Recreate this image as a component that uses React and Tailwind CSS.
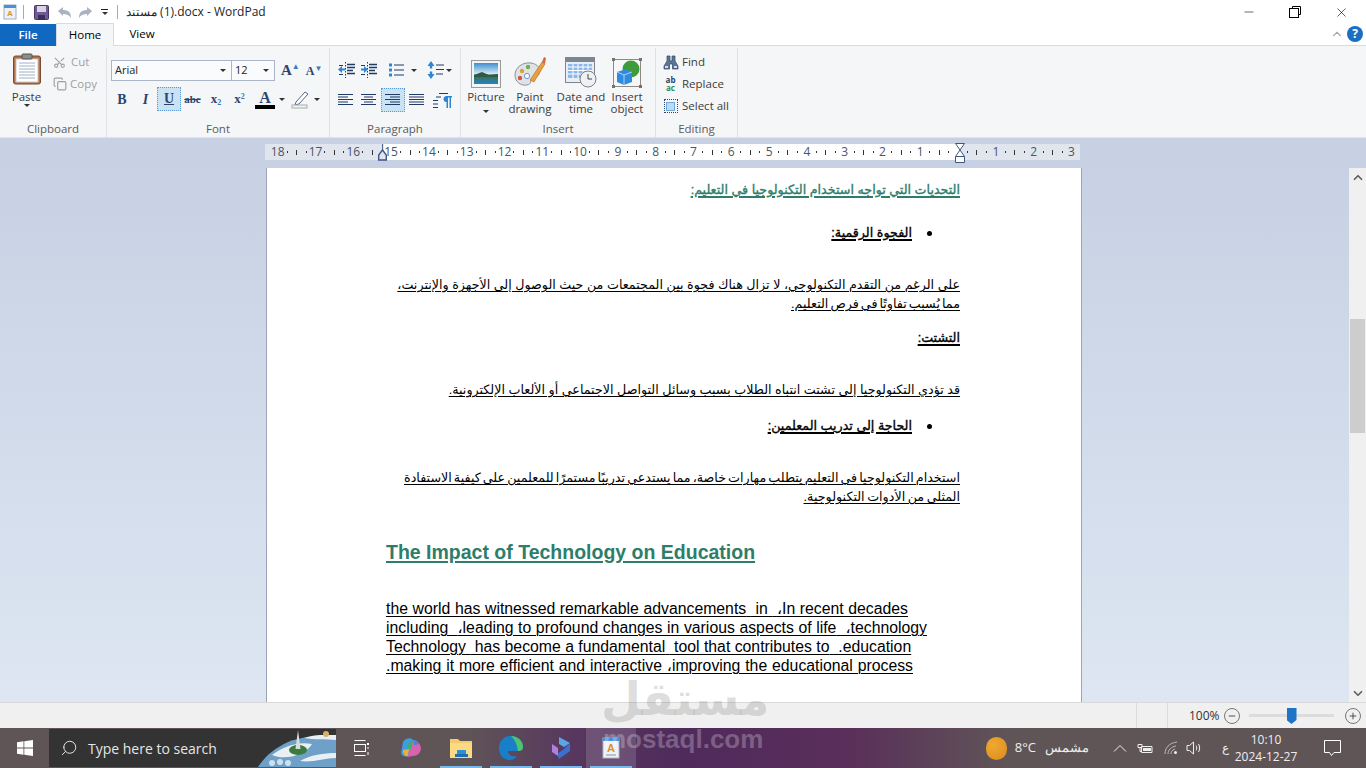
import React from 'react';
import { Minus, X, ChevronUp, ChevronDown, Search, Scissors, Copy, Plus } from 'lucide-react';

const Caret = ({ className = '' }) => <span className={`inline-block w-0 h-0 border-x-[3px] border-x-transparent border-t-[3px] border-t-[#333] ${className}`} />;

const navy = '#1f3b66';

const Lines = ({ rows }) => (
  <svg width="18" height="16" viewBox="0 0 18 16" stroke={navy} strokeWidth="1">
    {rows.map((r, i) => <line key={i} x1={r[0]} x2={r[1]} y1={i * 2.5 + 2.5} y2={i * 2.5 + 2.5} />)}
  </svg>
);

const IndentIcon = ({ flip }) => (
  <svg width="18" height="16" viewBox="0 0 18 16">
    <path d="M7.500 0v16" stroke={navy} strokeDasharray="1.500 1.500" />
    <path d="M9 2.500h8M9 5.500h8M9 8.500h6M9 11.500h8" stroke={navy} strokeWidth="1.300" fill="none" />
    <path d="M1 3.500h4M1 12.500h4" stroke={navy} />
    {flip
      ? <path d="M1 6.500h3V4l4 3.500L4 11V8.500H1z" fill="#2a86d6" />
      : <path d="M7 6.500H4V4L0 7.500 4 11V8.500h3z" fill="#2a86d6" />}
  </svg>
);

const ListIcon = () => (
  <svg width="18" height="16" viewBox="0 0 18 16">
    <path d="M1 1.500h3v3H1zM1 6.500h3v3H1zM1 11.500h3v3H1z" fill="#2a86d6" />
    <path d="M6 3h10M6 8h10M6 13h10" stroke={navy} />
  </svg>
);

const SpacingIcon = () => (
  <svg width="18" height="18" viewBox="0 0 18 18">
    <path d="M4 0l3.500 5H5.200v2.500H2.800V5H.5zM4 18L.5 13h2.300v-2.500h2.400V13h2.300z" fill="#2a86d6" />
    <path d="M9 4h8M9 8.500h8M9 13h7" stroke={navy} />
  </svg>
);

const RtlIcon = () => (
  <svg width="20" height="17" viewBox="0 0 20 17">
    <path d="M7 1.500h9M4 5h5M1 8.500h5M1 12h5M1 15.500h5" stroke={navy} />
    <path d="M14 4h6v1.500h-1V16h-1.500V5.500H16V16h-1.500V10a3 3 0 0 1-3-3 3 3 0 0 1 2.500-3z" fill="#2a86d6" />
  </svg>
);

const Clipboard = () => (
  <svg width="30" height="32" viewBox="0 0 30 32">
    <rect x="1.500" y="3" width="27" height="28" rx="2" fill="#b0714a" stroke="#7c4a2d" />
    <rect x="4" y="6" width="22" height="23" fill="#fff" stroke="#c9c9c9" />
    <path d="M7 10h16M7 13h16M7 16h16M7 19h16M7 22h16M7 25h16" stroke="#9fb0c8" />
    <rect x="10" y="1" width="10" height="5" rx="1" fill="#8d8d8d" stroke="#555" />
  </svg>
);

const PictureIcon = () => (
  <svg width="30" height="28" viewBox="0 0 30 28">
    <rect x="0.500" y="0.500" width="29" height="27" fill="#f4f4f4" stroke="#9a9a9a" />
    <defs><linearGradient id="sky" x1="0" y1="0" x2="0" y2="1"><stop offset="0" stopColor="#3d8fd0" /><stop offset=".5" stopColor="#cfe6f2" /><stop offset=".6" stopColor="#3f6a4e" /><stop offset="1" stopColor="#1f86c8" /></linearGradient></defs>
    <rect x="3" y="3" width="24" height="21" fill="url(#sky)" />
    <path d="M3 15l8-3 7 3 9-1v3H3z" fill="#2f5a40" />
  </svg>
);

const PaletteIcon = () => (
  <svg width="34" height="32" viewBox="0 0 34 32">
    <path d="M2 19C2 11 10 6 18 7c7 1 10 6 8 11-1 3-5 2-7 4-2 3 0 6-5 7C8 30 2 26 2 19z" fill="#dfe3e8" stroke="#8b9099" />
    <circle cx="9" cy="15" r="2.200" fill="#d9a23b" />
    <circle cx="15" cy="11" r="2.200" fill="#6fae4f" />
    <circle cx="7" cy="22" r="2.200" fill="#d2553d" />
    <circle cx="14" cy="20" r="2.600" fill="#fff" stroke="#6c95c9" />
    <path d="M17 24L29 6l3 2-11 18z" fill="#e8a03c" stroke="#b06f22" strokeWidth=".6" />
    <path d="M29 6l2-5 2 1-1 6z" fill="#d8673a" />
  </svg>
);

const CalendarIcon = () => (
  <svg width="32" height="32" viewBox="0 0 32 32">
    <rect x="0.500" y="1.500" width="29" height="25" fill="#e9eef5" stroke="#80858d" />
    <rect x="1" y="2" width="28" height="4" fill="#7d8794" />
    <path d="M3 8h24v14H3z" fill="#8cb7ea" />
    <path d="M3 11h24M3 14.500h24M3 18h24M8 8v14M13 8v14M18 8v14M23 8v14" stroke="#fff" />
    <circle cx="23" cy="23" r="8" fill="#eef0f2" stroke="#7c8087" />
    <path d="M23 18v5h4" stroke="#444" fill="none" />
  </svg>
);

const ObjectIcon = () => (
  <svg width="30" height="30" viewBox="0 0 30 30">
    <rect x="1.500" y="1.500" width="27" height="27" fill="#f7f7f7" stroke="#8f8a80" />
    <circle cx="19" cy="11" r="8.500" fill="#3f9b3a" />
    <path d="M5 14l9-3 6 3v10l-8 3-7-3z" fill="#2f8be0" />
    <path d="M5 14l7 3 8-3M12 17v10" stroke="#a9d3f7" fill="none" />
    <path d="M0 0h3v3H0zM27 0h3v3h-3zM0 27h3v3H0zM27 27h3v3h-3z" fill="#77736b" />
  </svg>
);

const Binoculars = () => (
  <svg width="16" height="15" viewBox="0 0 16 15">
    <path d="M4 1h3v5h2V1h3v5l3 5v3H9.500V9h-3v5H1v-3l3-5z" fill="#5d7694" stroke="#2f4868" strokeWidth=".7" />
    <path d="M2 11h3v2H2zM11 11h3v2h-3z" fill="#cfdbea" />
  </svg>
);

const SmallAction = ({ icon, label }) => (
  <div className="h-[22px] flex items-center gap-[3px] pl-[6px]">
    <span className="w-[17px] flex justify-center">{icon}</span>
    <span>{label}</span>
  </div>
);

const BigButton = ({ icon, lines, caret, width }) => (
  <div className={`${width} flex flex-col items-center`}>
    <div className="h-[34px] flex items-end justify-center">{icon}</div>
    <div className="mt-[3px] leading-[12px] text-center whitespace-nowrap">
      {lines.map((l) => <div key={l}>{l}</div>)}
      {caret && <Caret />}
    </div>
  </div>
);

const Group = ({ label, width, children }) => (
  <div className={`${width} h-[89px] mt-[2px] border-r border-[#dfe1e5] flex flex-col shrink-0`}>
    <div className="flex-1 min-h-0">{children}</div>
    <div className="h-[16px] text-center text-[#5b5b5b] leading-[16px]">{label}</div>
  </div>
);

const Ribbon = () => (
  <div className="h-[92px] shrink-0 bg-[#f5f6f7] flex text-[11.5px] text-[#3c3c3c] border-b border-[#e1e3e6]">
    <Group label="Clipboard" width="w-[107px]">
      <div className="flex pt-[5px]">
        <div className="w-[53px] flex flex-col items-center">
          <Clipboard />
          <div className="mt-[5px] leading-[14px]">Paste</div>
          <Caret />
        </div>
        <div className="text-[#a0a0a0] -mt-[2px]">
          <div className="h-[22px] flex items-center gap-[5px]"><Scissors size={13} className="-rotate-90" />Cut</div>
          <div className="h-[22px] flex items-center gap-[3px]"><Copy size={14} />Copy</div>
        </div>
      </div>
    </Group>

    <Group label="Font" width="w-[223px]">
      <div className="pl-[4px] pt-[12px]">
        <div className="flex items-center h-[21px]">
          <div className="w-[121px] h-[21px] border border-[#abb5c9] bg-[#fafbfd] flex items-center justify-between px-[3px] text-[#222] text-[11px]">Arial<Caret className="mr-[2px]" /></div>
          <div className="w-[43px] h-[21px] border border-l-0 border-[#abb5c9] bg-[#fafbfd] flex items-center justify-between px-[3px] text-[#222] text-[11px]">12<Caret className="mr-[2px]" /></div>
          <div className="ml-[6px] text-[15px] font-bold font-['Liberation_Serif',serif] text-[#2b4470] leading-none">A<span className="text-[8px] align-top text-[#3a7bc0]">▲</span></div>
          <div className="ml-[6px] text-[12px] font-bold font-['Liberation_Serif',serif] text-[#2b4470] leading-none">A<span className="text-[8px] align-top text-[#3a7bc0]">▼</span></div>
        </div>
        <div className="flex items-center h-[24px] mt-[6px] -ml-px text-[#2b4470] font-['Liberation_Serif',serif]">
          <div className="w-[24px] text-center font-bold text-[14px]">B</div>
          <div className="w-[23px] text-center italic font-bold text-[14px]">I</div>
          <div className="w-[24px] h-[24px] bg-[#c9e2f4] border border-dotted border-[#5a9bd4] text-center font-bold text-[14px] underline leading-[22px]">U</div>
          <div className="w-[23px] text-center text-[11px] line-through font-bold">abc</div>
          <div className="w-[24px] text-center font-bold text-[13px]">x<sub className="text-[8px] text-[#3a7bc0]">2</sub></div>
          <div className="w-[23px] text-center font-bold text-[13px]">x<sup className="text-[8px] text-[#3a7bc0]">2</sup></div>
          <div className="w-[20px] ml-[4px] text-center font-bold text-[16px] leading-[15px] border-b-[4px] border-black">A</div>
          <Caret className="ml-[4px]" />
          <svg className="ml-[6px]" width="20" height="20" viewBox="0 0 20 20"><path d="M5 13l9-10 3 2-9 10-4 1z" fill="#fff" stroke="#4d6a90" /><rect x="1" y="16" width="15" height="3" fill="#f3f3f3" stroke="#aaa" /></svg>
          <Caret className="ml-[3px]" />
        </div>
      </div>
    </Group>

    <Group label="Paragraph" width="w-[131px]">
      <div className="pl-[4px] pt-[13px]">
        <div className="flex items-center h-[18px] pl-[4px]">
          <IndentIcon />
          <span className="ml-[4px]"><IndentIcon flip /></span>
          <span className="ml-[10px]"><ListIcon /></span>
          <Caret className="ml-[5px]" />
          <span className="ml-[10px]"><SpacingIcon /></span>
          <Caret className="ml-[1px]" />
        </div>
        <div className="flex items-center h-[24px] mt-[9px]">
          <div className="w-[23px] flex justify-center"><Lines rows={[[1, 16], [1, 11], [1, 16], [1, 11], [1, 16]]} /></div>
          <div className="w-[24px] flex justify-center"><Lines rows={[[1, 16], [4, 13], [1, 16], [4, 13], [1, 16]]} /></div>
          <div className="w-[24px] h-[24px] bg-[#c9e2f4] border border-dotted border-[#5a9bd4] flex justify-center items-center"><Lines rows={[[1, 16], [6, 16], [1, 16], [6, 16], [1, 16]]} /></div>
          <div className="w-[23px] flex justify-center"><Lines rows={[[1, 16], [1, 16], [1, 16], [1, 16], [1, 16]]} /></div>
          <div className="w-[27px] flex justify-center"><RtlIcon /></div>
        </div>
      </div>
    </Group>

    <Group label="Insert" width="w-[195px]">
      <div className="flex pl-[3px] pt-[6px]">
        <BigButton icon={<PictureIcon />} lines={['Picture']} caret width="w-[44px]" />
        <BigButton icon={<PaletteIcon />} lines={['Paint', 'drawing']} width="w-[44px]" />
        <BigButton icon={<CalendarIcon />} lines={['Date and', 'time']} width="w-[58px]" />
        <BigButton icon={<ObjectIcon />} lines={['Insert', 'object']} width="w-[34px]" />
      </div>
    </Group>

    <Group label="Editing" width="w-[82px]">
      <div className="pt-[3px]">
        <SmallAction icon={<Binoculars />} label="Find" />
        <SmallAction icon={<span className="text-[8px] font-bold leading-[8px] text-[#2b4470] text-center">ab<br /><span className="text-[#2e8b57]">ac</span></span>} label="Replace" />
        <SmallAction icon={<span className="w-[14px] h-[14px] border border-dotted border-[#2b4470] flex items-center justify-center"><span className="w-[9px] h-[9px] bg-[#bcdcf5] border border-[#6fa8dc]" /></span>} label="Select all" />
      </div>
    </Group>
  </div>
);

const rulerNums = [18, 17, 16, 15, 14, 13, 12, 11, 10, 9, 8, 7, 6, 5, 4, 3, 2, 1, null, 1, 2, 3];

const Ruler = () => (
  <div className="h-[30px] shrink-0 bg-[#c7d1e3] pt-[6px] pl-[265px]">
    <div className="relative w-[815px] h-[16px] flex pl-[8px] text-[12px] text-[#4a5568] font-['Open_Sans',sans-serif] bg-[linear-gradient(to_right,#e1e6ee_119px,#ffffff_119px,#ffffff_695px,#e1e6ee_695px)]">
      {rulerNums.map((n, i) => (
        <div key={i} className="w-[37.8px] shrink-0 grid grid-cols-4 items-center text-center leading-[16px]">
          <span className="whitespace-nowrap flex justify-center">{n}</span>
          {i < rulerNums.length - 1 && (
            <>
              <span className="flex justify-center"><span className="w-px h-[2px] bg-[#333]" /></span>
              <span className="flex justify-center"><span className="w-px h-[5px] bg-[#333]" /></span>
              <span className="flex justify-center"><span className="w-px h-[2px] bg-[#333]" /></span>
            </>
          )}
        </div>
      ))}
      <svg className="absolute left-[113px] top-0" width="9" height="17" viewBox="0 0 9 17"><path d="M4.500 0v6" stroke="#51668c" /><path d="M.7 16V11l3.800-5 3.800 5v5z" fill="#dfe6f1" stroke="#3f5683" strokeWidth="1.400" /></svg>
      <svg className="absolute left-[690px] top-[-1px]" width="10" height="20" viewBox="0 0 10 20"><path d="M.5.5h9L5 7l4.500 6.500v6h-9v-6L5 7z" fill="#fff" stroke="#3f5683" /><path d="M.5 13.500h9" stroke="#3f5683" /></svg>
    </div>
  </div>
);

const U = ({ children, bold }) => <span className={`underline underline-offset-2 ${bold ? 'decoration-2' : 'decoration-1'}`}>{children}</span>;

// DejaVu's Arabic bold runs far too wide, so the bold lines are the regular face with a hairline stroke
const arBold = 'text-[12.7px] [-webkit-text-stroke:0.35px_currentColor]';

// justified line, stretched to the width the reference has
const Ar = ({ width, children }) => (
  <div dir="rtl" className={`h-[19px] leading-[19px] whitespace-nowrap [text-align-last:justify] ${width}`}><U>{children}</U></div>
);

const En = ({ width, children }) => (
  <div className={`h-[19px] leading-[19px] whitespace-nowrap [text-align-last:justify] ${width}`}><U>{children}</U></div>
);

const Bullet = ({ children, className }) => (
  <div dir="rtl" className={`h-[19px] leading-[19px] flex items-center ${arBold} ${className}`}>
    <span className="w-[48px] flex justify-center"><span className="w-[5px] h-[5px] rounded-full bg-black mr-[14px]" /></span>
    <U bold>{children}</U>
  </div>
);

const Page = () => (
  <div className="w-[816px] ml-[266px] h-full bg-white shrink-0 border-x border-[#9aa6b8] pl-[119px] pr-[121px] overflow-hidden text-[12.7px] text-black font-['Liberation_Sans','DejaVu_Sans',sans-serif] pt-[13px]">
    <div dir="rtl" className={`h-[19px] leading-[19px] text-[#2e7d6b] ${arBold}`}><U bold>التحديات التي تواجه استخدام التكنولوجيا في التعليم:</U></div>
    <Bullet className="mt-[24px]">الفجوة الرقمية:</Bullet>
    <Ar width="w-[562px] ml-[12px] mt-[33px]">على الرغم من التقدم التكنولوجي، لا تزال هناك فجوة بين المجتمعات من حيث الوصول إلى الأجهزة والإنترنت،</Ar>
    <div dir="rtl" className="h-[19px] leading-[19px] [word-spacing:-1.5px]"><U>مما يُسبب تفاوتًا في فرص التعليم.</U></div>
    <div dir="rtl" className={`h-[19px] leading-[19px] mt-[15px] ${arBold}`}><U bold>التشتت:</U></div>
    <Ar width="w-[510px] ml-[64px] mt-[33px]">قد تؤدي التكنولوجيا إلى تشتت انتباه الطلاب بسبب وسائل التواصل الاجتماعي أو الألعاب الإلكترونية.</Ar>
    <Bullet className="mt-[17px]">الحاجة إلى تدريب المعلمين:</Bullet>
    <Ar width="w-[556px] ml-[18px] mt-[33px] [word-spacing:-1.6px]">استخدام التكنولوجيا في التعليم يتطلب مهارات خاصة، مما يستدعي تدريبًا مستمرًا للمعلمين على كيفية الاستفادة</Ar>
    <div dir="rtl" className="h-[19px] leading-[19px] [word-spacing:-1px]"><U>المثلى من الأدوات التكنولوجية.</U></div>
    <div className="mt-[32px] h-[26px] leading-[26px] text-[19.5px] font-bold text-[#2e7d6b]"><U bold>The Impact of Technology on Education</U></div>
    <div className="mt-[34px] text-[15.8px]">
      <En width="w-[522px]">the world has witnessed remarkable advancements{'\u00a0'} in {'\u00a0'}،In recent decades</En>
      <En width="w-[541px]">including {'\u00a0'}،leading to profound changes in various aspects of life{'\u00a0'} ،technology</En>
      <En width="w-[525px]">Technology{'\u00a0'} has become a fundamental{'\u00a0'} tool that contributes to{'\u00a0'} .education</En>
      <En width="w-[527px]">.making it more efficient and interactive ،improving the educational process</En>
    </div>
  </div>
);

const Scrollbar = () => (
  <div className="w-[17px] h-full bg-[#f0f0f0] flex flex-col items-center">
    <ChevronUp size={14} strokeWidth={3} className="text-[#606060] mt-[1px] h-[17px]" />
    <div className="mt-[133px] w-[15px] h-[114px] bg-[#cdcdcd]" />
    <div className="flex-1" />
    <ChevronDown size={14} strokeWidth={3} className="text-[#606060] h-[17px]" />
  </div>
);

const TaskIcon = ({ children, active, open }) => (
  <div className={`w-[50px] h-[40px] flex items-center justify-center relative ${active ? 'bg-white/15' : ''}`}>
    {children}
    {open && <span className="absolute bottom-0 left-[4px] right-[4px] h-[2px] bg-[#76b9ed]" />}
  </div>
);

const Taskbar = () => (
  <div className="h-[40px] shrink-0 flex items-center text-white font-['Open_Sans',sans-serif] bg-[linear-gradient(to_right,#5f5557_0%,#5f5557_34%,#57375e_42%,#4f2a5c_50%,#5a2f5a_62%,#5f5557_74%,#5f5557_100%)]">
    <div className="w-[49px] flex justify-center">
      <svg width="16" height="16" viewBox="0 0 16 16" fill="#fff"><path d="M0 2.200l6.500-.9v6.300H0zM7.300 1.200L16 0v7.600H7.300zM0 8.400h6.500v6.300L0 13.800zM7.300 8.400H16V16l-8.700-1.200z" /></svg>
    </div>
    <div className="w-[287px] h-[38px] bg-[#333] flex items-center text-[14px] text-[#e6e6e6] overflow-hidden">
      <Search size={18} strokeWidth={1.300} className="ml-[11px] -scale-x-100" />
      <span className="ml-[10px] whitespace-nowrap">Type here to search</span>
      <svg className="ml-auto" width="78" height="38" viewBox="0 0 78 38">
        <path d="M0 38C8 26 16 20 30 13c12-5 28-6 48-7v32z" fill="#6ea0c8" />
        <path d="M14 26c10-8 26-14 40-11-4 8-24 18-40 11zM46 9c10-4 22-3 32-3v5c-10-1-22 0-32-2zM42 32c10-6 24-8 36-8v5c-12 0-24 5-36 3z" fill="#e8f0f6" />
        <ellipse cx="40" cy="21" rx="9" ry="5" fill="#3d7a3f" />
        <path d="M40 1l2.500 19h-5z" fill="#dcdcdc" />
        <circle cx="68" cy="5" r="3" fill="#d8b06a" />
        <circle cx="14" cy="34" r="3" fill="#cfe0ec" /><circle cx="22" cy="33" r="3" fill="#cfe0ec" /><circle cx="30" cy="34" r="3" fill="#cfe0ec" />
      </svg>
    </div>
    <div className="w-[50px] flex justify-center">
      <svg width="16" height="16" viewBox="0 0 16 16" fill="none" stroke="#fff"><path d="M1.500.5h11M1.500 15.500h11" /><rect x="1.500" y="4.500" width="11" height="7" /><rect x="14" y="3" width="2" height="2" fill="#fff" stroke="none" /><path d="M15 7v2M15 12v3" /></svg>
    </div>
    <TaskIcon>
      <svg width="24" height="24" viewBox="0 0 24 24"><path d="M4 6c2-4 8-5 10-2l-4 14c-2 4-7 3-8-1z" fill="#3d9de0" /><path d="M4 14l6-1-1 7c-3 1-5-2-5-6z" fill="#e8b13e" /><path d="M14 4c4 0 7 3 8 8 0 5-4 8-8 8l-6 1 2-5z" fill="#d663b0" /><path d="M10 6h4l-2 7H8z" fill="#3fae6f" /><path d="M15 4c2 0 4 2 5 4l-5 1z" fill="#4a7fd8" /></svg>
    </TaskIcon>
    <TaskIcon open>
      <svg width="24" height="22" viewBox="0 0 24 22"><path d="M1 2h8l2 2h12v16H1z" fill="#f6c96b" /><rect x="1" y="6" width="22" height="15" fill="#fadb84" /><rect x="8" y="13" width="9" height="6" fill="#2f8fd6" /><rect x="6" y="17" width="13" height="3" fill="#1f6fb5" /></svg>
    </TaskIcon>
    <TaskIcon open>
      <svg width="26" height="26" viewBox="0 0 26 26"><path d="M1 13C1 6 6 1 13 1c7 0 12 5 12 11 0 3-2 4-6 4H10c0 4 4 6 9 5-2 3-5 4-7 4C5 25 1 20 1 13z" fill="#1a7fc9" /><path d="M13 1c7 0 12 5 12 11 0 3-2 4-5 4-1-8-4-12-7-15z" fill="#4fc46d" /></svg>
    </TaskIcon>
    <TaskIcon open>
      <svg width="22" height="24" viewBox="0 0 22 24"><path d="M9 1l11 6-6 4-5-3z" fill="#5aa7e8" /><path d="M20 7v8L9 23l-2-5 7-5z" fill="#3c6fd1" /><path d="M2 8l6 4v8l-6-4z" fill="#b07fe0" /></svg>
    </TaskIcon>
    <TaskIcon active open>
      <svg width="20" height="24" viewBox="0 0 20 24"><rect x="2" y="2" width="16" height="20" fill="#eef2f7" stroke="#aab6c6" /><rect x="2" y="1" width="16" height="4" fill="#4a90d9" /><text x="10" y="16" textAnchor="middle" fontSize="11" fontWeight="bold" fill="#d9922b" fontFamily="Liberation Sans">A</text><path d="M5 19h10" stroke="#7d93ad" /></svg>
    </TaskIcon>
    <div className="flex-1" />
    <span className="w-[21px] h-[23px] rounded-full bg-[radial-gradient(circle_at_35%_35%,#f0a92e,#d98a1f)]" />
    <span className="ml-[8px] text-[13px] text-[#eee]">8°C</span>
    <span dir="rtl" className="ml-[9px] text-[13px] text-[#eee]">مشمس</span>
    <svg className="ml-[24px] text-[#eee]" width="14" height="8" viewBox="0 0 14 8" fill="none" stroke="currentColor"><path d="M1 7.500l6-6 6 6" /></svg>
    <svg className="ml-[10px]" width="16" height="11" viewBox="0 0 16 11" fill="none" stroke="#eee"><path d="M4.500 3.500H15v6H4.500z" /><rect x="6" y="5" width="8" height="3" fill="#eee" stroke="none" /><path d="M1 1.500h4v3H1zM3 4.500v4H5" /></svg>
    <svg className="ml-[11px]" width="15" height="14" viewBox="0 0 15 14" fill="none" stroke="#bbb"><path d="M1 13C1 7 5 2 13 1M4 13c0-4 3-7 8-8M7 13c0-2 1-4 4-5" /><circle cx="11.500" cy="11.500" r="1.500" fill="#eee" stroke="none" /></svg>
    <svg className="ml-[7px]" width="16" height="14" viewBox="0 0 16 14" fill="none" stroke="#eee"><path d="M1 4.500h2.500L7.500 1v12l-4-3.500H1z" /><path d="M10 4.500c1 1.500 1 3.500 0 5M12.500 3c1.500 2.500 1.500 5.500 0 8" /></svg>
    <span className="ml-[20px] text-[12px] text-[#eee]">ع</span>
    <div className="w-[84px] -ml-[5px] text-center text-[12px] leading-[17px] text-[#eee]"><div>10:10</div><div>2024-12-27</div></div>
    <svg className="ml-[16px] mr-[25px]" width="17" height="17" viewBox="0 0 17 17" fill="none" stroke="#fff"><path d="M.5.500h16v12H10l-2.500 3-2-3h-5z" /></svg>
  </div>
);

export default function App() {
  return (
    <div className="relative w-[1366px] h-[768px] overflow-hidden flex flex-col bg-white font-['Open_Sans',sans-serif]">
      {/* title bar */}
      <div className="h-[24px] shrink-0 flex items-center text-[12px] text-[#1f1f1f]">
        <svg className="ml-[2px]" width="16" height="16" viewBox="0 0 16 16"><rect x="2" y="1" width="12" height="14" fill="#eef2f7" stroke="#9cb0c8" /><rect x="2" y="1" width="12" height="3" fill="#4a90d9" /><text x="8" y="12" textAnchor="middle" fontSize="8" fontWeight="bold" fill="#d9922b" fontFamily="Liberation Sans">A</text></svg>
        <span className="ml-[5px] w-px h-[14px] bg-[#aaa]" />
        <svg className="ml-[10px]" width="15" height="15" viewBox="0 0 15 15"><rect x=".5" y=".5" width="14" height="14" rx="1" fill="#6f5a94" stroke="#46366a" /><rect x="3" y="1" width="9" height="6" fill="#d9d3e6" /><rect x="4" y="10" width="7" height="5" fill="#3c2f5c" /></svg>
        <svg className="ml-[8px]" width="15" height="15" viewBox="0 0 15 15"><path d="M1 6l5-4v3c5 0 8 2 8 8-2-3-4-4-8-4v2z" fill="#a9b4c0" /></svg>
        <svg className="ml-[6px]" width="15" height="15" viewBox="0 0 15 15"><path d="M14 6L9 2v3c-5 0-8 2-8 8 2-3 4-4 8-4v2z" fill="#a9b4c0" /></svg>
        <span className="ml-[8px] flex flex-col items-center gap-[2px]"><span className="w-[7px] h-px bg-[#222]" /><Caret className="border-t-[#222]" /></span>
        <span className="ml-[9px] w-px h-[14px] bg-[#aaa]" />
        <span className="ml-[8px] whitespace-nowrap">مستند{'\u200e'} (1).docx - WordPad</span>
        <div className="ml-auto mr-[2px] flex text-black">
          <div className="w-[46px] -ml-[2px] flex justify-center"><Minus size={14} strokeWidth={1} /></div>
          <svg className="mx-[17px] mt-[1px]" width="12" height="12" viewBox="0 0 12 12" fill="none" stroke="#000"><path d="M3.500 2.500V.5h8v8h-2" /><rect x=".5" y="2.500" width="9" height="9" /></svg>
          <div className="w-[46px] flex justify-center"><X size={15} strokeWidth={1} /></div>
        </div>
      </div>

      {/* tabs */}
      <div className="h-[22px] shrink-0 flex items-end text-[11.5px] border-b border-[#dadbdc] relative">
        <div className="w-[56px] h-[22px] -mb-px bg-[#1168c0] text-white flex items-center justify-center font-semibold">File</div>
        <div className="w-[58px] h-[23px] -mb-px bg-[#f5f6f7] border-x border-t border-[#dadbdc] flex items-center justify-center">Home</div>
        <div className="w-[56px] h-[22px] flex items-center justify-center">View</div>
        <ChevronUp size={14} className="ml-auto mb-[4px] text-[#aaa]" />
        <span className="w-[16px] h-[16px] mx-[3px] mb-[3px] rounded-full bg-[#1b6ec2] text-white font-bold text-[12px] flex items-center justify-center">?</span>
      </div>

      <Ribbon />
      <Ruler />

      {/* document */}
      <div className="h-[534px] shrink-0 flex bg-[linear-gradient(to_bottom,#c7d1e3,#dde6f2)]">
        <Page />
        <div className="flex-1" />
        <Scrollbar />
      </div>

      {/* status bar */}
      <div className="h-[26px] shrink-0 bg-[#f0f0f0] border-t border-[#d9d9d9] flex items-center text-[12px] text-[#333]">
        <span className="ml-[1136px] w-px h-full bg-[#dcdcdc]" />
        <span className="ml-[30px] w-px h-full bg-[#dcdcdc]" />
        <span className="ml-[21px]">100%</span>
        <span className="ml-[4px] w-[16px] h-[16px] rounded-full border border-[#777] flex items-center justify-center"><Minus size={10} /></span>
        <div className="ml-[9px] w-[85px] h-[3px] bg-[#dcdcdc] flex items-center relative">
          <span className="absolute left-[38px] -top-[6px] w-[10px] h-[16px] bg-[#1f74c8] [clip-path:polygon(0_0,100%_0,100%_75%,50%_100%,0_75%)]" />
        </div>
        <span className="ml-[11px] w-[16px] h-[16px] rounded-full border border-[#777] flex items-center justify-center"><Plus size={10} /></span>
      </div>

      <Taskbar />

      {/* site watermark */}
      <div className="absolute left-[601px] top-[664px] text-[46px] leading-[70px] font-bold text-[#8a8a8a]/30 font-['DejaVu_Sans',sans-serif] pointer-events-none">مستقل</div>
      <div className="absolute left-[603px] top-[722px] text-[26px] leading-[34px] font-bold text-white/25 font-['Liberation_Sans',sans-serif] pointer-events-none">mostaql.com</div>
    </div>
  );
}
